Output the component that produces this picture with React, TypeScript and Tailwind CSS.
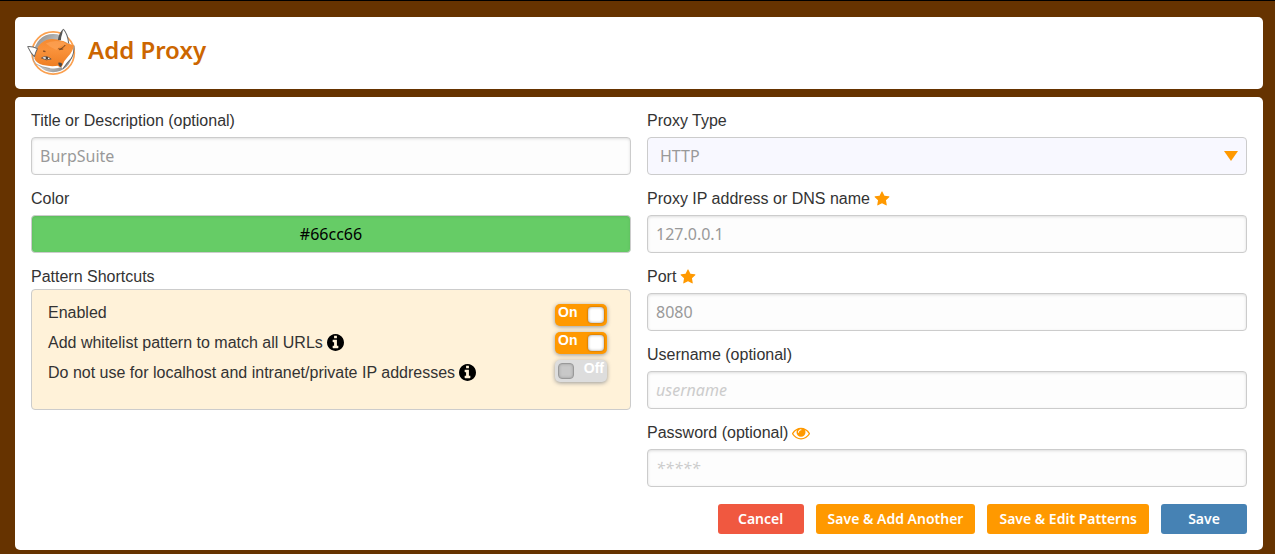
import { useState } from "react";
import type { ReactNode } from "react";

const inputClass =
  "h-[38px] w-full rounded border border-[#cccccc] bg-[#fdfdfd] px-2 font-['Noto_Sans','Open_Sans',sans-serif] text-base text-[#999999] shadow-[inset_0_1px_3px_#dddddd] outline-none placeholder:italic placeholder:text-[#cccccc] focus:border-[#ff9900]";

const buttonClass =
  "h-[30px] min-w-[86px] cursor-pointer rounded-[3px] px-3 font-['Noto_Sans','Open_Sans',sans-serif] text-sm font-semibold text-white";

function StarIcon() {
  return (
    <svg viewBox="0 0 1792 1792" className="size-4 fill-[#ff9900]" role="img" aria-label="Required">
      <path d="M1728 647q0 22-26 48l-363 354 86 500q1 7 1 20 0 21-10.5 35.5t-30.5 14.5q-19 0-40-12l-449-236-449 236q-22 12-40 12-21 0-31.5-14.5t-10.5-35.5q0-6 2-20l86-500-364-354q-25-27-25-48 0-37 56-46l502-73 225-455q19-41 49-41t49 41l225 455 502 73q56 9 56 46z" />
    </svg>
  );
}

function InfoIcon() {
  return (
    <svg viewBox="128 128 1536 1536" className="mb-0.5 size-[17px] fill-black" aria-hidden="true">
      <path d="M1152 1376v-160q0-14-9-23t-23-9h-96v-512q0-14-9-23t-23-9h-320q-14 0-23 9t-9 23v160q0 14 9 23t23 9h96v320h-96q-14 0-23 9t-9 23v160q0 14 9 23t23 9h448q14 0 23-9t9-23zm-128-896v-160q0-14-9-23t-23-9h-192q-14 0-23 9t-9 23v160q0 14 9 23t23 9h192q14 0 23-9t9-23zm640 416q0 209-103 385.5t-279.5 279.5-385.5 103-385.5-103-279.5-279.5-103-385.5 103-385.5 279.5-279.5 385.5-103 385.5 103 279.5 279.5 103 385.5z" />
    </svg>
  );
}

function EyeIcon() {
  return (
    <svg viewBox="0 0 1792 1792" className="size-[18px] fill-[#ff9900]" aria-hidden="true">
      <path d="M1664 960q-152-236-381-353 61 104 61 225 0 185-131.5 316.5t-316.5 131.5-316.5-131.5-131.5-316.5q0-121 61-225-229 117-381 353 133 205 333.5 326.5t434.5 121.5 434.5-121.5 333.5-326.5zm-720-384q0-20-14-34t-34-14q-125 0-214.5 89.5t-89.5 214.5q0 20 14 34t34 14 34-14 14-34q0-86 61-147t147-61q20 0 34-14t14-34zm848 384q0 34-20 69-140 230-376.5 368.5t-499.5 138.5-499.5-139-376.5-368q-20-35-20-69t20-69q140-229 376.5-368t499.5-139 499.5 139 376.5 368q20 35 20 69z" />
    </svg>
  );
}

function FoxLogo() {
  return (
    <svg viewBox="20 26 146 142" className="h-12 w-[49px]" role="img" aria-label="FoxyProxy">
      <defs>
        <linearGradient id="disc" x1="0" y1="0" x2="1" y2="1">
          <stop offset="0" stopColor="#858585" />
          <stop offset="0.5" stopColor="#cccccc" />
          <stop offset="1" stopColor="#7c7c7c" />
        </linearGradient>
        <linearGradient id="fur" x1="0" y1="0" x2="0" y2="1">
          <stop offset="0" stopColor="#f58a30" />
          <stop offset="0.4" stopColor="#f9923b" />
          <stop offset="1" stopColor="#ee7d22" />
        </linearGradient>
      </defs>
      <circle cx="98" cy="100" r="63" fill="#ffffff" stroke="#fba04f" strokeWidth="5" />
      <circle cx="98" cy="100" r="57" fill="url(#disc)" />
      <path
        d="M38 104 Q36 120 46 132 Q68 145 96 146 Q111 147 122 142 L127 147 Q139 129 152 116 Q161 101 159 79 L140 72 L50 88 Z"
        fill="#ffffff"
      />
      <path d="M127 147 Q139 130 152 116 Q161 101 160 78" fill="none" stroke="#666666" strokeWidth="3" />
      <path d="M38 106 Q36 122 47 133 Q64 143 88 146" fill="none" stroke="#8a8a8a" strokeWidth="2" />
      <path
        d="M50 86 Q60 68 78 61 Q92 56 110 60 Q128 62 142 72 Q153 75 160 78 Q156 97 143 110 Q129 124 124 140 Q118 144 112 138 Q91 141 67 136 Q48 130 42 117 Q43 101 50 86 Z"
        fill="url(#fur)"
      />
      <path d="M76 72 Q96 60 124 66 Q138 71 136 76 Q115 78 108 91 Q92 86 76 72 Z" fill="#ffb06b" opacity="0.45" />
      <path d="M22 81 Q36 80 51 87 Q45 98 42 111 Q31 101 22 81 Z" fill="#ffffff" stroke="#666666" strokeWidth="3" strokeLinejoin="round" />
      <path d="M114 61 Q117 42 128 29 Q141 40 144 71 Q133 63 114 61 Z" fill="#ffffff" />
      <path d="M128 29 Q141 42 144 71" fill="none" stroke="#666666" strokeWidth="3" />
      <path d="M112 61 Q115 41 128 28 Q125 45 122 52 L121 62 Z" fill="#555555" />
      <path d="M63 115 Q75 105 92 118 Q77 124 63 115 Z" fill="#ffffff" stroke="#5e4635" strokeWidth="2.5" />
      <circle cx="79" cy="115" r="4" fill="#4b4038" />
      <path d="M113 87 Q122 91 134 76 M116 90 Q122 88 128 88" fill="none" stroke="#7a4822" strokeWidth="3" />
      <path d="M68 94 L75 96" fill="none" stroke="#8a4d22" strokeWidth="4" />
      <path d="M113 129 Q122 126 125 133 Q124 140 119 142 Q113 137 113 129 Z" fill="#484848" />
    </svg>
  );
}

function Field({ id, label, icon, children }: { id: string; label: string; icon?: ReactNode; children: ReactNode }) {
  return (
    <div className="flex flex-col gap-1">
      <div className="flex h-6 items-center gap-1">
        <label htmlFor={id}>{label}</label>
        {icon}
      </div>
      {children}
    </div>
  );
}

function Toggle({ id, initial }: { id: string; initial: boolean }) {
  const [on, setOn] = useState(initial);
  return (
    <label
      className={
        "relative flex h-[22px] w-[52px] cursor-pointer items-center justify-between rounded-[5px] px-[3px] text-sm leading-4 font-bold text-white shadow-[0_1px_4px_#999999] " +
        (on ? "flex-row bg-[#ff9900]" : "flex-row-reverse bg-[#dddddd]")
      }
    >
      <input
        id={id}
        type="checkbox"
        role="switch"
        checked={on}
        onChange={(e) => setOn(e.target.checked)}
        className="absolute inset-0 m-0 h-full w-full cursor-pointer opacity-0"
      />
      <span className="self-start">{on ? "On" : "Off"}</span>
      <span
        className={
          "size-4 rounded " +
          (on
            ? "bg-white shadow-[inset_0_0_3px_#999999,0_0_2px_#995500]"
            : "border border-[#999999] bg-[#c8c8c8] shadow-[inset_0_0_3px_#999999]")
        }
      />
    </label>
  );
}

export default function App() {
  const [visible, setVisible] = useState(false);
  return (
    <div className="flex min-h-screen flex-col gap-2 border-t border-black bg-[#663300] pt-4 pr-3 pb-1 pl-[15px] font-['Liberation_Sans',Arial,sans-serif] text-base text-[#333333]">
      <header className="flex h-[72px] items-start gap-3 rounded-[5px] bg-white px-3 pt-[11px]">
        <FoxLogo />
        <h1 className="font-['Noto_Sans','Open_Sans',sans-serif] text-2xl leading-[44px] font-semibold text-[#cc6600]">
          Add Proxy
        </h1>
      </header>

      <form className="rounded-[5px] bg-white px-4 pt-3 pb-4" onSubmit={(e) => e.preventDefault()}>
        <div className="grid grid-cols-2 gap-4">
          <div className="flex flex-col gap-3">
            <Field id="title" label="Title or Description (optional)">
              <input id="title" type="text" defaultValue="BurpSuite" className={inputClass} />
            </Field>
            <Field id="color" label="Color">
              <input
                id="color"
                type="text"
                defaultValue="#66cc66"
                className="h-[38px] w-full rounded border border-[#cccccc] bg-[#66cc66] px-2 text-center font-['Noto_Sans','Open_Sans',sans-serif] text-base text-black shadow-[inset_0_1px_3px_#5cb85c] outline-none"
              />
            </Field>
            <fieldset>
              <legend className="h-6 leading-6">Pattern Shortcuts</legend>
              <div className="flex justify-between rounded border border-[#cccccc] bg-[#fff2d9] pt-2 pr-[23px] pb-[21px] pl-4">
                <div className="flex flex-col">
                  <div className="flex h-[30px] items-center">
                    <label htmlFor="enabled">Enabled</label>
                  </div>
                  <div className="flex h-[30px] items-center gap-1">
                    <label htmlFor="whitelist">Add whitelist pattern to match all URLs</label>
                    <InfoIcon />
                  </div>
                  <div className="flex h-[30px] items-center gap-1">
                    <label htmlFor="localhost">Do not use for localhost and intranet/private IP addresses</label>
                    <InfoIcon />
                  </div>
                </div>
                <div className="flex flex-col gap-1.5 pt-1.5">
                  <Toggle id="enabled" initial={true} />
                  <Toggle id="whitelist" initial={true} />
                  <Toggle id="localhost" initial={false} />
                </div>
              </div>
            </fieldset>
          </div>

          <div className="flex flex-col gap-3">
            <Field id="type" label="Proxy Type">
              <div className="relative">
                <select
                  id="type"
                  className="h-[38px] w-full appearance-none rounded border border-[#cccccc] bg-[#f8f8ff] px-3 font-['Noto_Sans','Open_Sans',sans-serif] text-base text-[#999999] outline-none"
                >
                  <option>HTTP</option>
                </select>
                <svg viewBox="0 0 14 10" className="pointer-events-none absolute top-3.5 right-[9px] h-2.5 w-3.5 fill-[#ff9900]" aria-hidden="true">
                  <path d="M0 0h14l-7 10z" />
                </svg>
              </div>
            </Field>
            <Field id="address" label="Proxy IP address or DNS name" icon={<StarIcon />}>
              <input id="address" type="text" defaultValue="127.0.0.1" className={inputClass} />
            </Field>
            <Field id="port" label="Port" icon={<StarIcon />}>
              <input id="port" type="text" defaultValue="8080" className={inputClass} />
            </Field>
            <Field id="username" label="Username (optional)">
              <input id="username" type="text" placeholder="username" className={inputClass} />
            </Field>
            <Field
              id="password"
              label="Password (optional)"
              icon={
                <button type="button" aria-label="Show password" className="cursor-pointer" onClick={() => setVisible(!visible)}>
                  <EyeIcon />
                </button>
              }
            >
              <input id="password" type={visible ? "text" : "password"} placeholder="*****" className={inputClass} />
            </Field>
          </div>
        </div>

        <div className="mt-[17px] flex justify-end gap-3">
          <button type="button" className={buttonClass + " bg-[#f05840]"}>Cancel</button>
          <button type="button" className={buttonClass + " bg-[#ff9900]"}>Save &amp; Add Another</button>
          <button type="button" className={buttonClass + " bg-[#ff9900]"}>Save &amp; Edit Patterns</button>
          <button type="submit" className={buttonClass + " bg-[#4682b4]"}>Save</button>
        </div>
      </form>
    </div>
  );
}
